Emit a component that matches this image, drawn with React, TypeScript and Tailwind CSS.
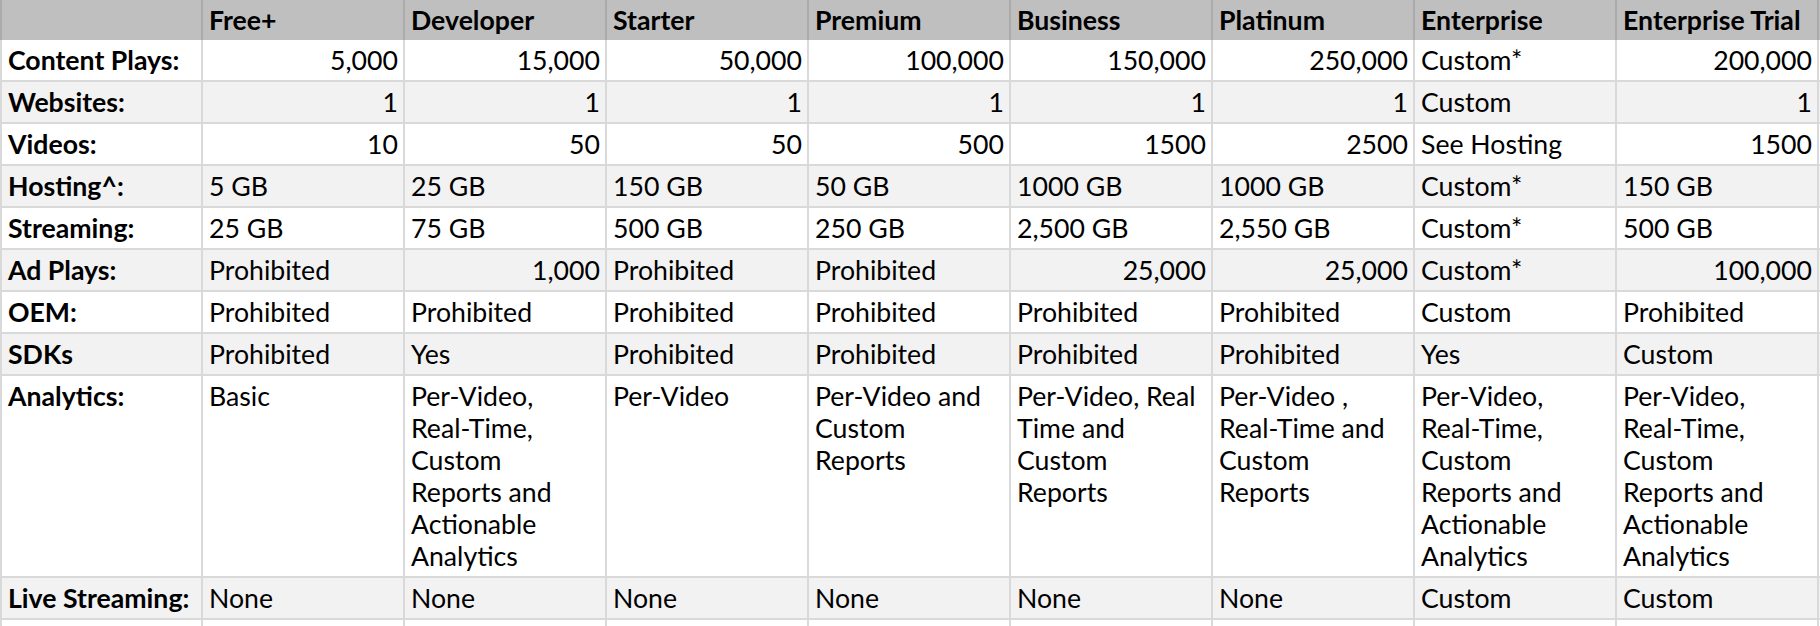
import React from 'react';

type Cell = { text: string | string[]; right?: boolean };

const plans = ['Free+', 'Developer', 'Starter', 'Premium', 'Business', 'Platinum', 'Enterprise', 'Enterprise Trial'];

const R = (text: string): Cell => ({ text, right: true });
const L = (text: string | string[]): Cell => ({ text });

const fullAnalytics = ['Per-Video,', 'Real-Time,', 'Custom', 'Reports and', 'Actionable', 'Analytics'];

const rows: { label: string; cells: Cell[] }[] = [
  {
    label: 'Content Plays:',
    cells: [R('5,000'), R('15,000'), R('50,000'), R('100,000'), R('150,000'), R('250,000'), L('Custom*'), R('200,000')],
  },
  { label: 'Websites:', cells: [R('1'), R('1'), R('1'), R('1'), R('1'), R('1'), L('Custom'), R('1')] },
  { label: 'Videos:', cells: [R('10'), R('50'), R('50'), R('500'), R('1500'), R('2500'), L('See Hosting'), R('1500')] },
  {
    label: 'Hosting^:',
    cells: [L('5 GB'), L('25 GB'), L('150 GB'), L('50 GB'), L('1000 GB'), L('1000 GB'), L('Custom*'), L('150 GB')],
  },
  {
    label: 'Streaming:',
    cells: [L('25 GB'), L('75 GB'), L('500 GB'), L('250 GB'), L('2,500 GB'), L('2,550 GB'), L('Custom*'), L('500 GB')],
  },
  {
    label: 'Ad Plays:',
    cells: [L('Prohibited'), R('1,000'), L('Prohibited'), L('Prohibited'), R('25,000'), R('25,000'), L('Custom*'), R('100,000')],
  },
  {
    label: 'OEM:',
    cells: [L('Prohibited'), L('Prohibited'), L('Prohibited'), L('Prohibited'), L('Prohibited'), L('Prohibited'), L('Custom'), L('Prohibited')],
  },
  {
    label: 'SDKs',
    cells: [L('Prohibited'), L('Yes'), L('Prohibited'), L('Prohibited'), L('Prohibited'), L('Prohibited'), L('Yes'), L('Custom')],
  },
  {
    label: 'Analytics:',
    cells: [
      L('Basic'),
      L(fullAnalytics),
      L('Per-Video'),
      L(['Per-Video and', 'Custom', 'Reports']),
      L(['Per-Video, Real', 'Time and', 'Custom', 'Reports']),
      L(['Per-Video ,', 'Real-Time and', 'Custom', 'Reports']),
      L(fullAnalytics),
      L(fullAnalytics),
    ],
  },
  {
    label: 'Live Streaming:',
    cells: [L('None'), L('None'), L('None'), L('None'), L('None'), L('None'), L('Custom'), L('Custom')],
  },
];

const App: React.FC = () => {
  return (
    <div className="w-[1820px] bg-white font-['Lato',sans-serif] text-[26.67px] leading-[32px] text-black">
      {/* header */}
      <div className="grid grid-cols-[203px_repeat(8,202px)] bg-[#bfbfbf] font-bold">
        <div className="h-[40px] border-l-2 border-r-2 border-[#ababab]" />
        {plans.map(p => (
          <div key={p} className="h-[40px] border-r-2 border-[#ababab] pl-[6px] pt-[4px]">
            {p}
          </div>
        ))}
      </div>

      {rows.map((row, i) => (
        <div
          key={row.label}
          className={`grid grid-cols-[203px_repeat(8,202px)] border-b-2 border-[#d9d9d9] ${i % 2 === 1 ? 'bg-[#f2f2f2]' : 'bg-white'}`}
        >
          <div className="border-l-2 border-r-2 border-[#d9d9d9] pl-[6px] pt-[4px] pb-[4px] font-bold">{row.label}</div>
          {row.cells.map((c, j) => (
            <div
              key={j}
              className={`border-r-2 border-[#d9d9d9] pl-[6px] pr-[5px] pt-[4px] pb-[4px] ${c.right ? 'text-right' : 'text-left'}`}
            >
              {Array.isArray(c.text) ? c.text.map(line => <div key={line}>{line}</div>) : c.text}
            </div>
          ))}
        </div>
      ))}

      {/* start of the next row, cut by the frame */}
      <div className="grid grid-cols-[203px_repeat(8,202px)] bg-white">
        <div className="h-[40px] border-l-2 border-r-2 border-[#d9d9d9]" />
        {plans.map(p => (
          <div key={p} className="h-[40px] border-r-2 border-[#d9d9d9]" />
        ))}
      </div>
    </div>
  );
};

export default App;
